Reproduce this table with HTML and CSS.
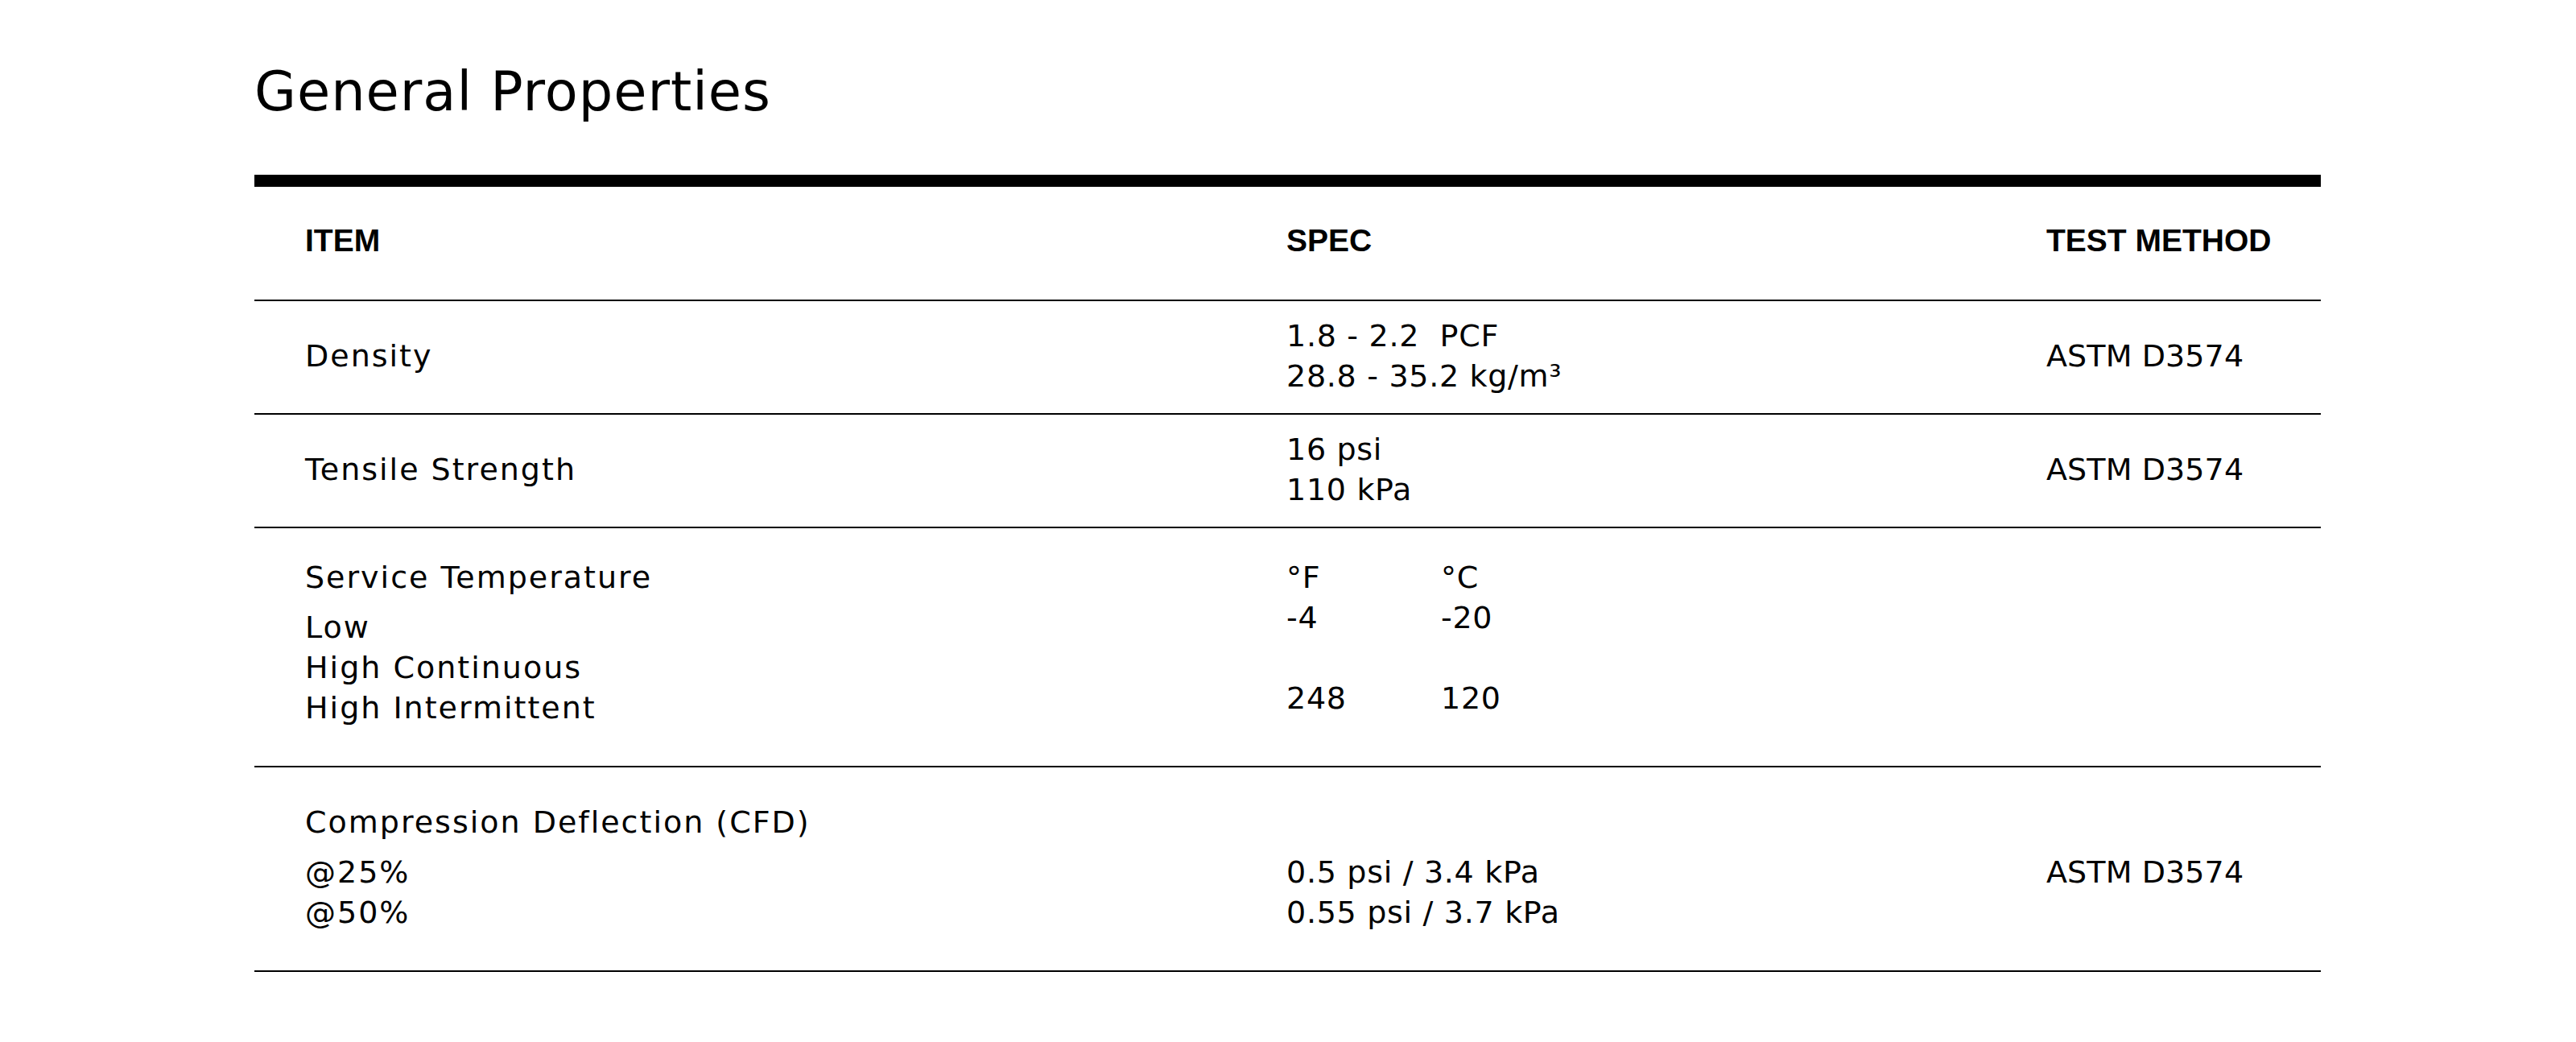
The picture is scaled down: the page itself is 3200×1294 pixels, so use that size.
FILE: index.html
```html
<!DOCTYPE html>
<html lang="en">
<head>
<meta charset="utf-8">
<title>General Properties</title>
<link rel="stylesheet" href="styles.css">
</head>
<body>
<main class="page">
  <h1 class="title">General Properties</h1>
  <div class="table">
    <div class="row head">
      <div class="cell">ITEM</div>
      <div class="cell">SPEC</div>
      <div class="cell">TEST METHOD</div>
    </div>
    <div class="row">
      <div class="cell item">Density</div>
      <div class="cell spec">
        <div>1.8 - 2.2&nbsp; PCF</div>
        <div>28.8 - 35.2 kg/m³</div>
      </div>
      <div class="cell method">ASTM D3574</div>
    </div>
    <div class="row">
      <div class="cell item">Tensile Strength</div>
      <div class="cell spec">
        <div>16 psi</div>
        <div>110 kPa</div>
      </div>
      <div class="cell method">ASTM D3574</div>
    </div>
    <div class="row tall temp">
      <div class="cell item">
        <p class="lead">Service Temperature</p>
        <div>Low</div>
        <div>High Continuous</div>
        <div>High Intermittent</div>
      </div>
      <div class="cell spec">
        <div class="units">
          <span>°F</span><span>°C</span>
          <span>-4</span><span>-20</span>
          <span>&nbsp;</span><span>&nbsp;</span>
          <span>248</span><span>120</span>
        </div>
      </div>
      <div class="cell method"></div>
    </div>
    <div class="row tall cfd">
      <div class="cell item">
        <p class="lead">Compression Deflection (CFD)</p>
        <div>@25%</div>
        <div>@50%</div>
      </div>
      <div class="cell spec">
        <p class="lead">&nbsp;</p>
        <div>0.5 psi / 3.4 kPa</div>
        <div>0.55 psi / 3.7 kPa</div>
      </div>
      <div class="cell method">
        <p class="lead">&nbsp;</p>
        <div>ASTM D3574</div>
      </div>
    </div>
  </div>
</main>
</body>
</html>
```
FILE: styles.css
```css
html, body {
  margin: 0;
  padding: 0;
  background: #ffffff;
  color: #000000;
}

.page {
  width: 2567px;
  padding: 74px 0 0 316px;
  font-family: "DejaVu Sans", "Liberation Sans", sans-serif;
}

.title {
  margin: 0 0 63px 0;
  font-size: 67px;
  line-height: 80px;
  font-weight: 400;
  letter-spacing: 1px;
}

.table {
  border-top: 15px solid #000;
}

.row {
  display: grid;
  grid-template-columns: 1219px 944px 404px;
  align-items: center;
  padding: 18px 0 21px 0;
  border-bottom: 2px solid #000;
  font-size: 38px;
  line-height: 50px;
}

.row.head {
  padding: 42px 0 48px 0;
  font-family: "Liberation Sans", Arial, sans-serif;
  font-weight: 700;
  font-size: 39px;
}

.row.tall {
  align-items: start;
}

.row.temp {
  padding: 36px 0 47px 0;
}

.row.cfd {
  padding: 43px 0 47px 0;
}

.cell {
  padding: 0 64px 0 63px;
  white-space: nowrap;
}

.item {
  letter-spacing: 2px;
}

.spec {
  letter-spacing: 0.7px;
}

.method {
  letter-spacing: 0.1px;
}

.lead {
  margin: 0 0 12px 0;
}

.units {
  display: grid;
  grid-template-columns: 192px auto;
}
```
